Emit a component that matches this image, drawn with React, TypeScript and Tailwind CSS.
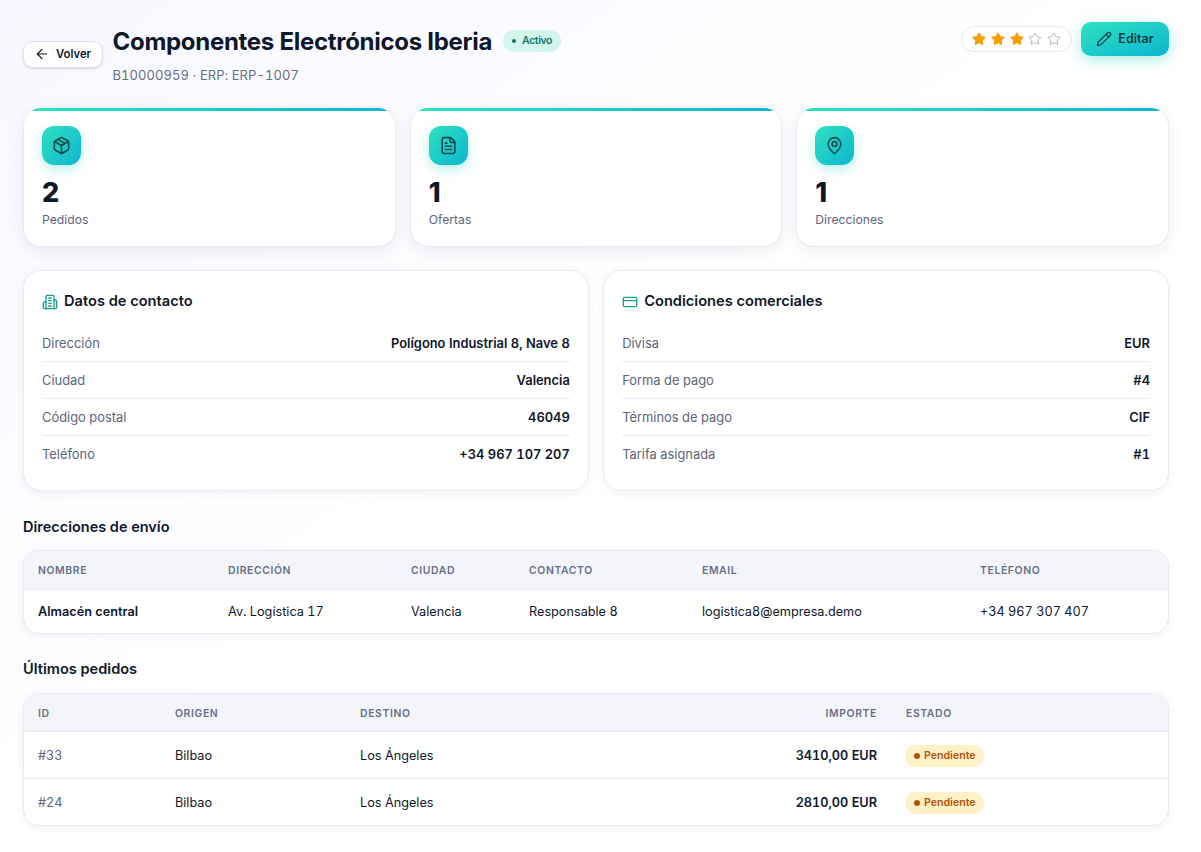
import { ArrowLeft, CreditCard, FileText, MapPin, Package, Pencil, Star } from "lucide-react"

const stats = [
  { icon: Package, value: "2", label: "Pedidos" },
  { icon: FileText, value: "1", label: "Ofertas" },
  { icon: MapPin, value: "1", label: "Direcciones" },
]

const contacto = [
  ["Dirección", "Polígono Industrial 8, Nave 8"],
  ["Ciudad", "Valencia"],
  ["Código postal", "46049"],
  ["Teléfono", "+34 967 107 207"],
]

const condiciones = [
  ["Divisa", "EUR"],
  ["Forma de pago", "#4"],
  ["Términos de pago", "CIF"],
  ["Tarifa asignada", "#1"],
]

const pedidos = [
  ["#33", "Bilbao", "Los Ángeles", "3410,00 EUR"],
  ["#24", "Bilbao", "Los Ángeles", "2810,00 EUR"],
]

function BuildingIcon() {
  return (
    <svg width="16" height="16" viewBox="0 0 24 24" fill="none" stroke="#14a38b" strokeWidth="2" strokeLinecap="round" strokeLinejoin="round">
      <path d="M6 22V4a2 2 0 0 1 2-2h8a2 2 0 0 1 2 2v18Z" />
      <path d="M6 12H4a2 2 0 0 0-2 2v6a2 2 0 0 0 2 2h2" />
      <path d="M18 9h2a2 2 0 0 1 2 2v9a2 2 0 0 1-2 2h-2" />
      <path d="M10 6h4" />
      <path d="M10 10h4" />
      <path d="M10 14h4" />
      <path d="M10 18h4" />
    </svg>
  )
}

function InfoRows({ rows }: { rows: string[][] }) {
  return (
    <div>
      {rows.map(([k, v], i) => (
        <div
          key={k}
          className={"flex items-center justify-between h-[37px] pt-[1px] text-[12.9px] tabular-nums " + (i < rows.length - 1 ? "border-b border-[#e8eaf3]" : "")}
        >
          <span className="text-[#5d6579]">{k}</span>
          <span className="font-semibold text-[#0f172a]">{v}</span>
        </div>
      ))}
    </div>
  )
}

function Th({ children, right }: { children: string; right?: boolean }) {
  return (
    <th className={"pl-[14px] pr-[15px] pt-[2px] text-[10.4px] font-semibold tracking-[0.06em] uppercase text-[#667085] " + (right ? "text-right" : "text-left")}>
      {children}
    </th>
  )
}

export default function App() {
  return (
    <div className="min-h-[852px] bg-gradient-to-br from-[#f7f8ff] via-white to-white text-[#0f172a]" style={{ fontFamily: "Inter, 'Noto Sans', sans-serif" }}>
      <div className="w-[1146px] ml-[23px] pt-[22px]">
        <header className="flex items-start justify-between h-[86px]">
          <div className="flex items-center gap-[9.5px] mt-[1px]">
            <button className="flex items-center gap-[6px] h-[27px] w-[80px] pl-[10px] rounded-[10px] border border-[#dfe2f0] bg-white shadow-sm text-[11.3px] font-semibold text-[#0f172a]">
              <ArrowLeft size={16} strokeWidth={1.75} />
              Volver
            </button>
            <div>
              <div className="flex items-center gap-[11px] h-[38px]">
                <h1 className="text-[24px] font-bold tracking-[-0.012em] text-[#0f172a]">Componentes Electrónicos Iberia</h1>
                <span className="flex items-center gap-[6px] h-[22px] -mt-[2px] px-[9px] rounded-full bg-[#d2f5ec] text-[10.5px] font-semibold tracking-[-0.04em] text-[#0f766e]">
                  <span className="w-[4px] h-[4px] rounded-full bg-[#0f766e]" />
                  Activo
                </span>
              </div>
              <p className="mt-[5px] text-[13px] tracking-[0.005em] tabular-nums text-[#667085]">B10000959 · ERP: ERP-1007</p>
            </div>
          </div>
          <div className="flex items-center gap-[9px]">
            <div className="flex items-center gap-[4.7px] h-[26px] px-[10px] rounded-full border border-[#e5e7f2] bg-white">
              {[0, 1, 2, 3, 4].map(i =>
                i < 3 ? (
                  <Star key={i} size={14} className="fill-[#f59e0b] text-[#f59e0b]" />
                ) : (
                  <Star key={i} size={14} strokeWidth={1.5} className="text-[#a3a9bb]" />
                )
              )}
            </div>
            <button className="flex items-center justify-center gap-[6px] w-[88px] h-[34px] rounded-[10px] bg-gradient-to-br from-[#2de2c0] to-[#0fb5cf] shadow-[0_4px_14px_rgba(45,212,191,0.4)] text-[12.5px] font-semibold text-[#0f3d3e]">
              <Pencil size={16} strokeWidth={1.75} />
              Editar
            </button>
          </div>
        </header>

        <section className="grid grid-cols-3 gap-[14px]">
          {stats.map(s => (
            <div key={s.label} className="relative h-[139px] overflow-hidden rounded-[18px] border border-t-0 border-[#e8eaf3] bg-white px-[18px] pt-[18px] shadow-[0_4px_16px_rgba(30,41,90,0.08)]">
              <div className="absolute left-0 right-0 top-0 h-[3px] bg-gradient-to-r from-[#2de2c0] to-[#0fb5cf]" />
              <div className="flex items-center justify-center w-[39px] h-[39px] rounded-[12px] bg-gradient-to-br from-[#2de2c0] to-[#0fb5cf] shadow-[0_4px_12px_rgba(45,212,191,0.35)] text-[#0f4c4c]">
                <s.icon size={19} strokeWidth={2} />
              </div>
              <div className="mt-[11px] text-[27px] leading-[34px] font-extrabold text-[#0f172a]">{s.value}</div>
              <div className="mt-[1px] text-[12.2px] text-[#5d6579]">{s.label}</div>
            </div>
          ))}
        </section>

        <section className="grid grid-cols-2 gap-[14.4px] mt-[23px]">
          <div className="h-[221px] rounded-[18px] border border-[#e8eaf3] bg-white px-[18px] pt-[21px] shadow-[0_2px_10px_rgba(30,41,90,0.06)]">
            <h2 className="flex items-center gap-[6px] h-[20px] mb-[13px] text-[14.65px] font-semibold text-[#0f172a]">
              <BuildingIcon />
              Datos de contacto
            </h2>
            <InfoRows rows={contacto} />
          </div>
          <div className="h-[221px] rounded-[18px] border border-[#e8eaf3] bg-white px-[18px] pt-[21px] shadow-[0_2px_10px_rgba(30,41,90,0.06)]">
            <h2 className="flex items-center gap-[6px] h-[20px] mb-[13px] text-[14.65px] font-semibold text-[#0f172a]">
              <CreditCard size={16} strokeWidth={2} className="text-[#14a38b]" />
              Condiciones comerciales
            </h2>
            <InfoRows rows={condiciones} />
          </div>
        </section>

        <h2 className="mt-[25px] h-[20px] text-[14.5px] font-semibold text-[#0f172a]">Direcciones de envío</h2>
        <div className="mt-[14px] overflow-hidden rounded-[16px] border border-[#e8eaf3] bg-white shadow-[0_2px_10px_rgba(30,41,90,0.06)]">
          <table className="w-full table-fixed text-[12.7px] tabular-nums">
            <colgroup>
              <col className="w-[190px]" />
              <col className="w-[183px]" />
              <col className="w-[118px]" />
              <col className="w-[173px]" />
              <col className="w-[278px]" />
              <col />
            </colgroup>
            <thead>
              <tr className="h-[38px] bg-[#f4f5fb] border-b border-[#e8eaf3]">
                <Th>Nombre</Th>
                <Th>Dirección</Th>
                <Th>Ciudad</Th>
                <Th>Contacto</Th>
                <Th>Email</Th>
                <Th>Teléfono</Th>
              </tr>
            </thead>
            <tbody>
              <tr className="h-[44px]">
                <td className="px-[14px] font-semibold">Almacén central</td>
                <td className="px-[14px]">Av. Logística 17</td>
                <td className="px-[14px]">Valencia</td>
                <td className="px-[14px]">Responsable 8</td>
                <td className="px-[14px]">logistica8@empresa.demo</td>
                <td className="px-[14px]">+34 967 307 407</td>
              </tr>
            </tbody>
          </table>
        </div>

        <h2 className="mt-[25px] h-[20px] text-[14.6px] font-semibold text-[#0f172a]">Últimos pedidos</h2>
        <div className="mt-[14px] overflow-hidden rounded-[16px] border border-[#e8eaf3] bg-white shadow-[0_2px_10px_rgba(30,41,90,0.06)]">
          <table className="w-full table-fixed text-[12.7px] tabular-nums">
            <colgroup>
              <col className="w-[137px]" />
              <col className="w-[185px]" />
              <col className="w-[300px]" />
              <col className="w-[246px]" />
              <col />
            </colgroup>
            <thead>
              <tr className="h-[37px] bg-[#f4f5fb] border-b border-[#e8eaf3] [&>th]:pt-[4px]">
                <Th>ID</Th>
                <Th>Origen</Th>
                <Th>Destino</Th>
                <Th right>Importe</Th>
                <Th>Estado</Th>
              </tr>
            </thead>
            <tbody>
              {pedidos.map((p, i) => (
                <tr key={p[0]} className={"h-[47px] " + (i === 0 ? "border-b border-[#e8eaf3] [&>td]:pt-[2px]" : "[&>td]:pt-[1px]")}>
                  <td className="px-[14px] text-[#5d6579]">{p[0]}</td>
                  <td className="px-[14px]">{p[1]}</td>
                  <td className="px-[14px]">{p[2]}</td>
                  <td className="pl-[14px] pr-[15px] text-right font-semibold">{p[3]}</td>
                  <td className="pl-[13px] pr-[14px]">
                    <span className={"inline-flex items-center gap-[4px] h-[22px] pl-[9px] pr-[8px] rounded-full bg-[#fef0c7] text-[10.6px] font-semibold text-[#b45309] " + (i === 1 ? "mt-[1px]" : "")}>
                      <span className="w-[6px] h-[6px] rounded-full bg-[#b45309]" />
                      Pendiente
                    </span>
                  </td>
                </tr>
              ))}
            </tbody>
          </table>
        </div>
      </div>
    </div>
  )
}
